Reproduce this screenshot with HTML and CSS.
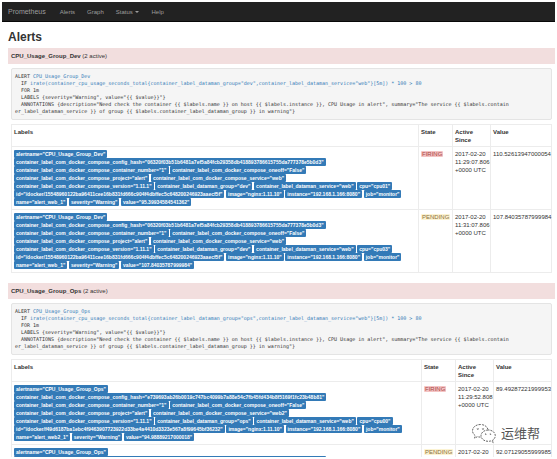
FILE: index.html
```html
<!DOCTYPE html>
<html lang="en">
<head>
<meta charset="utf-8">
<title>Prometheus</title>
<link rel="stylesheet" href="styles.css">
</head>
<body>
<nav class="navbar">
  <a class="brand" href="#">Prometheus</a>
  <a href="#">Alerts</a>
  <a href="#">Graph</a>
  <button type="button">Status <span class="caret"></span></button>
  <a href="#">Help</a>
</nav>
<main class="content">
  <h1>Alerts</h1>

  <section class="alert-group">
    <button type="button" class="alert-header"><b>CPU_Usage_Group_Dev</b> (2 active)</button>
    <div class="details">
<pre>ALERT <a href="#">CPU_Usage_Group_Dev</a>
  IF <a href="#">irate(container_cpu_usage_seconds_total{container_label_dataman_group="dev",container_label_dataman_service="web"}[5m]) * 100 &gt; 80</a>
  FOR 1m
  LABELS {severity="Warning", value="{{ $value}}"}
  ANNOTATIONS {description="Need check the container {{ $labels.name }} on host {{ $labels.instance }}, CPU Usage in alert", summary="The service {{ $labels.contain
er_label_dataman_service }} of group {{ $labels.container_label_dataman_group }} in warning"}</pre>
      <table>
        <colgroup><col><col class="col-state"><col class="col-since"><col class="col-value"></colgroup>
        <thead>
          <tr><th>Labels</th><th>State</th><th>Active Since</th><th>Value</th></tr>
        </thead>
        <tbody>
          <tr>
            <td>
              <span class="label">alertname="CPU_Usage_Group_Dev"</span><br>
              <span class="label">container_label_com_docker_compose_config_hash="06320f03b51b6481a7ef5a84fcb29358db418893786615755da777378e5b0d3"</span><br>
              <span class="label">container_label_com_docker_compose_container_number="1"</span>
              <span class="label">container_label_com_docker_compose_oneoff="False"</span><br>
              <span class="label">container_label_com_docker_compose_project="alert"</span>
              <span class="label">container_label_com_docker_compose_service="web"</span><br>
              <span class="label">container_label_com_docker_compose_version="1.11.1"</span>
              <span class="label">container_label_dataman_group="dev"</span>
              <span class="label">container_label_dataman_service="web"</span>
              <span class="label">cpu="cpu01"</span><br>
              <span class="label">id="/docker/15548960122ba96411cee16b831fd666c904f4dbffec5c648200246923aaecf5f"</span>
              <span class="label">image="nginx:1.11.10"</span>
              <span class="label">instance="192.168.1.166:8080"</span>
              <span class="label">job="monitor"</span><br>
              <span class="label">name="alert_web_1"</span>
              <span class="label">severity="Warning"</span>
              <span class="label">value="95.39934584541362"</span>
            </td>
            <td><span class="state firing">FIRING</span></td>
            <td>2017-02-20 11:29:07.806 +0000 UTC</td>
            <td>110.52613947000054</td>
          </tr>
          <tr>
            <td>
              <span class="label">alertname="CPU_Usage_Group_Dev"</span><br>
              <span class="label">container_label_com_docker_compose_config_hash="06320f03b51b6481a7ef5a84fcb29358db418893786615755da777378e5b0d3"</span><br>
              <span class="label">container_label_com_docker_compose_container_number="1"</span>
              <span class="label">container_label_com_docker_compose_oneoff="False"</span><br>
              <span class="label">container_label_com_docker_compose_project="alert"</span>
              <span class="label">container_label_com_docker_compose_service="web"</span><br>
              <span class="label">container_label_com_docker_compose_version="1.11.1"</span>
              <span class="label">container_label_dataman_group="dev"</span>
              <span class="label">container_label_dataman_service="web"</span>
              <span class="label">cpu="cpu03"</span><br>
              <span class="label">id="/docker/15548960122ba96411cee16b831fd666c904f4dbffec5c648200246923aaecf5f"</span>
              <span class="label">image="nginx:1.11.10"</span>
              <span class="label">instance="192.168.1.166:8080"</span>
              <span class="label">job="monitor"</span><br>
              <span class="label">name="alert_web_1"</span>
              <span class="label">severity="Warning"</span>
              <span class="label">value="107.84035787999984"</span>
            </td>
            <td><span class="state pending">PENDING</span></td>
            <td>2017-02-20 11:31:07.806 +0000 UTC</td>
            <td>107.84035787999984</td>
          </tr>
        </tbody>
      </table>
    </div>
  </section>

  <section class="alert-group">
    <button type="button" class="alert-header"><b>CPU_Usage_Group_Ops</b> (2 active)</button>
    <div class="details">
<pre>ALERT <a href="#">CPU_Usage_Group_Ops</a>
  IF <a href="#">irate(container_cpu_usage_seconds_total{container_label_dataman_group="ops",container_label_dataman_service="web"}[5m]) * 100 &gt; 80</a>
  FOR 1m
  LABELS {severity="Warning", value="{{ $value}}"}
  ANNOTATIONS {description="Need check the container {{ $labels.name }} on host {{ $labels.instance }}, CPU Usage in alert", summary="The service {{ $labels.contain
er_label_dataman_service }} of group {{ $labels.container_label_dataman_group }} in warning"}</pre>
      <table class="narrow-value">
        <colgroup><col><col class="col-state"><col class="col-since"><col class="col-value"></colgroup>
        <thead>
          <tr><th>Labels</th><th>State</th><th>Active Since</th><th>Value</th></tr>
        </thead>
        <tbody>
          <tr>
            <td>
              <span class="label">alertname="CPU_Usage_Group_Ops"</span><br>
              <span class="label">container_label_com_docker_compose_config_hash="e739693ab26b0019c747bc4099b7a88e54c7fb45fd434b8f5169f1fc23b48b81"</span><br>
              <span class="label">container_label_com_docker_compose_container_number="1"</span>
              <span class="label">container_label_com_docker_compose_oneoff="False"</span><br>
              <span class="label">container_label_com_docker_compose_project="alert"</span>
              <span class="label">container_label_com_docker_compose_service="web2"</span><br>
              <span class="label">container_label_com_docker_compose_version="1.11.1"</span>
              <span class="label">container_label_dataman_group="ops"</span>
              <span class="label">container_label_dataman_service="web"</span>
              <span class="label">cpu="cpu00"</span><br>
              <span class="label">id="/docker/f49d6187ba1ebc4f9463907723922d33be4a4410d3323e567a8f99645bf36232"</span>
              <span class="label">image="nginx:1.11.10"</span>
              <span class="label">instance="192.168.1.166:8080"</span>
              <span class="label">job="monitor"</span><br>
              <span class="label">name="alert_web2_1"</span>
              <span class="label">severity="Warning"</span>
              <span class="label">value="94.98889217000018"</span>
            </td>
            <td><span class="state firing">FIRING</span></td>
            <td>2017-02-20 11:29:52.808 +0000 UTC</td>
            <td>89.49287221999953</td>
          </tr>
          <tr>
            <td>
              <span class="label">alertname="CPU_Usage_Group_Ops"</span><br>
              <span class="label">container_label_com_docker_compose_config_hash="e739693ab26b0019c747bc4099b7a88e54c7fb45fd434b8f5169f1fc23b48b81"</span>
            </td>
            <td><span class="state pending">PENDING</span></td>
            <td>2017-02-20 11:31:52.808 +0000 UTC</td>
            <td>92.07129055999985</td>
          </tr>
        </tbody>
      </table>
    </div>
  </section>
</main>
<div class="watermark">
  <svg viewBox="0 0 26 20" aria-hidden="true">
    <path d="M9.500 1.500C4.800 1.500 1.500 4.300 1.500 7.800c0 2 1.100 3.700 2.800 4.900l-.8 2.500 2.900-1.500c1 .3 2 .4 3.100.4"/>
    <path d="M17 6.500c-.8-3-3.800-5-7.500-5"/>
    <path d="M17.200 7c-4.100 0-7.200 2.600-7.200 5.700s3.100 5.600 7.200 5.600c.9 0 1.700-.1 2.500-.3l2.500 1.300-.7-2.100c1.700-1 2.800-2.700 2.800-4.500C24.300 9.600 21.300 7 17.200 7z"/>
    <circle cx="6.800" cy="5.800" r=".6"/><circle cx="12" cy="5.800" r=".6"/>
    <circle cx="14.800" cy="11" r=".5"/><circle cx="19.500" cy="11" r=".5"/>
  </svg>
  <span>运维帮</span>
</div>
</body>
</html>
```

FILE: styles.css
```css
* { box-sizing: border-box; }

body {
  display: flex;
  flex-direction: column;
  height: 100vh;
  margin: 0;
  padding: 2px;
  overflow: hidden;
  background: #fff;
  color: #333;
  font: 6px/8px "Liberation Sans", Arial, sans-serif;
}

a { color: #337ab7; text-decoration: none; }

button {
  border: 0;
  background: none;
  font: inherit;
  text-align: left;
  cursor: pointer;
}

.navbar {
  display: flex;
  flex: none;
  align-items: center;
  gap: 12px;
  height: 20px;
  padding: 0 6px;
  background: #222;
  border-bottom: 1px solid #080808;
}
.navbar a, .navbar button { padding: 0; color: #9d9d9d; }
.navbar .brand { margin-right: 2px; font-size: 7px; }

.caret {
  display: inline-block;
  margin-left: 1px;
  vertical-align: middle;
  border-top: 2px solid;
  border-left: 2px solid transparent;
  border-right: 2px solid transparent;
}

.content {
  flex: 1;
  min-height: 0;
  padding-left: 6px;
  overflow: hidden;
}

h1 {
  margin: 0;
  padding: 8px 0 4px;
  font-size: 12px;
  line-height: 14px;
}

.alert-group { margin-bottom: 10px; }

.alert-header {
  display: block;
  width: 100%;
  padding: 4px 3px;
  background: #f2dede;
  color: #333;
}

.details { padding: 4px 3px 0; }

pre {
  margin: 0 0 4px;
  padding: 4px 3px;
  overflow: hidden;
  background: #f5f5f5;
  border: 1px solid #e4e4e4;
  border-radius: 2px;
  font: 5px/7px "DejaVu Sans Mono", monospace;
}

table {
  width: 100%;
  table-layout: fixed;
  border-collapse: collapse;
}
th, td {
  padding: 3px 2px 2px;
  border: 1px solid #ececec;
  text-align: left;
  vertical-align: top;
}
td { padding-bottom: 3px; }
td:last-child { white-space: nowrap; }

.col-state { width: 34px; }
.col-since { width: 38px; }
.col-value { width: 61px; }
.narrow-value .col-value { width: 58px; }

.label {
  padding: 1px 2px;
  background: #337ab7;
  border-radius: 1px;
  color: #fff;
  font-size: 5px;
  font-weight: bold;
  white-space: nowrap;
}

.state { padding: 0 1px; border-radius: 1px; }
.firing { background: #f4c4c4; color: #a94442; }
.pending { background: #fcf3d2; color: #8a6d3b; }

.watermark {
  position: absolute;
  right: 17px;
  bottom: 16px;
  display: flex;
  align-items: center;
  gap: 4px;
  color: #555;
  font: 13px/20px "Noto Sans CJK SC", sans-serif;
}
.watermark svg {
  width: 26px;
  height: 20px;
  fill: #fff;
  stroke: #666;
  stroke-width: 1;
  stroke-dasharray: 2 1;
}
```
